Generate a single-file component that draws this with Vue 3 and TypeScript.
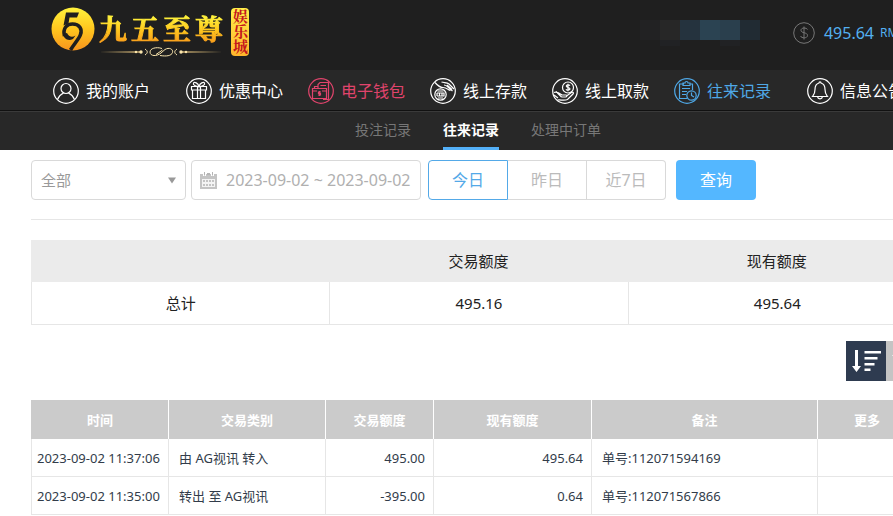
<script setup lang="ts">
import { ref } from 'vue'

type IconName = 'user' | 'gift' | 'wallet' | 'deposit' | 'withdraw' | 'records' | 'bell'

interface NavItem {
  icon: IconName
  label: string
  tone?: 'pink' | 'blue'
}

interface Entry {
  time: string
  kind: string
  amount: string
  balance: string
  note: string
}

const navGroups: NavItem[][] = [
  [{ icon: 'user', label: '我的账户' }],
  [
    { icon: 'gift', label: '优惠中心' },
    { icon: 'wallet', label: '电子钱包', tone: 'pink' },
    { icon: 'deposit', label: '线上存款' },
    { icon: 'withdraw', label: '线上取款' },
    { icon: 'records', label: '往来记录', tone: 'blue' },
  ],
  [{ icon: 'bell', label: '信息公告' }],
]

const subNav: string[] = ['投注记录', '往来记录', '处理中订单']
const activeSub = ref('往来记录')

const ranges: string[] = ['今日', '昨日', '近7日']
const activeRange = ref('今日')

const category = ref('全部')
const dateRange = ref('2023-09-02 ~ 2023-09-02')

const entries: Entry[] = [
  { time: '2023-09-02 11:37:06', kind: '由 AG视讯 转入', amount: '495.00', balance: '495.64', note: '单号:112071594169' },
  { time: '2023-09-02 11:35:00', kind: '转出 至 AG视讯', amount: '-395.00', balance: '0.64', note: '单号:112071567866' },
]
</script>

<template>
  <div class="page">
    <header class="top">
      <a class="brand" href="#">
        <svg class="emblem" viewBox="0 0 44 44" aria-hidden="true">
          <defs>
            <linearGradient id="gold" x1="0" y1="0" x2="0" y2="1">
              <stop offset="0" stop-color="#fff23c" />
              <stop offset="0.5" stop-color="#ffc61e" />
              <stop offset="1" stop-color="#f7941d" />
            </linearGradient>
          </defs>
          <circle cx="22" cy="22" r="21.5" fill="url(#gold)" />
          <path d="M15 5.500H28L26 10.500H18.500L17.500 16.500L12.500 18.500Z" fill="#1f1f1f" />
          <path d="M13.500 29C11.500 21 16 17 21.500 17C28.500 17 31.500 22 29.500 27.500C28 32 23 37 19.500 43" fill="none" stroke="#1f1f1f" stroke-width="3.600" />
          <path d="M12 27C13 32 17 34.500 22 32L24.500 28.500C21 31 17.500 29.500 16 26Z" fill="#1f1f1f" />
        </svg>
        <span class="wordmark">
          <span class="name"><span>九</span><span>五</span><span>至</span><span>尊</span></span>
          <svg class="flourish" viewBox="0 0 124 12" aria-hidden="true">
            <path d="M0 6L42 5.300V6.700ZM124 6L82 5.300V6.700Z" fill="#d8b978" />
            <g fill="#fbe6ad">
              <circle cx="37" cy="6" r="1.200" /><circle cx="42" cy="6" r="1.700" />
              <circle cx="82" cy="6" r="1.700" /><circle cx="87" cy="6" r="1.200" />
            </g>
            <path d="M46 3C49 5 49 7 46 9M78 3C75 5 75 7 78 9M63 2.500C57 0.500 51 2.500 51 6C51 10.500 58 10.500 62 7L66 3.500C70 1 74.500 3 73.500 6.500C72.500 10 67 10.500 61 9.500M57 8.500L63.500 4" fill="none" stroke="#fbe6ad" />
          </svg>
        </span>
        <span class="seal">娱乐城</span>
      </a>

      <div class="account">
        <svg class="masked" viewBox="0 0 120 30" aria-hidden="true">
          <path d="M0 0H20V20H0Z" fill="#222223" />
          <path d="M20 0H40V20H20Z" fill="#272727" />
          <path d="M40 0H60V20H40Z" fill="#25333e" />
          <path d="M60 0H80V20H60Z" fill="#2b4352" />
          <path d="M80 0H100V20H80Z" fill="#2a3f4d" />
          <path d="M100 0H120V20H100Z" fill="#212b33" />
          <path d="M20 20H40V26H20ZM80 20H100V26H80Z" fill="#212224" />
        </svg>
        <svg class="coin" viewBox="0 0 22 22" aria-hidden="true">
          <circle cx="11" cy="11" r="10.300" />
          <path d="M14.500 7.500C13.500 5.500 8 5.300 8 8.300C8 11.500 14.500 10 14.500 13.500C14.500 16.500 8.500 16.500 7.500 14M11 4.500V17.500" />
        </svg>
        <span class="amount">495.64</span>
        <span class="unit">RMB</span>
      </div>
    </header>

    <nav class="main-nav" aria-label="主菜单">
      <div v-for="(group, g) in navGroups" :key="g" class="nav-group">
        <a v-for="item in group" :key="item.label" href="#" class="nav-item" :class="item.tone">
          <svg viewBox="0 0 26 26" aria-hidden="true">
            <circle cx="13" cy="13" r="12.300" />
            <g v-if="item.icon === 'user'">
              <circle cx="13" cy="10.500" r="5" />
              <path d="M4.500 21.500C6 17.500 8.500 16 10.500 15M21.500 21.500C20 17.500 17.500 16 15.500 15" />
            </g>
            <g v-else-if="item.icon === 'gift'">
              <path d="M5.500 8.500H20.500V12H5.500ZM6.500 12V20.500H19.500V12M11.500 8.500V20.500M14.500 8.500V20.500M13 8.500C10 8.500 6.500 7 7.500 5C8.500 3.500 12 5 13 8.500C14 5 17.500 3.500 18.500 5C19.500 7 16 8.500 13 8.500" />
            </g>
            <g v-else-if="item.icon === 'wallet'">
              <path d="M4.500 10.500H18.500V20.500H4.500ZM4.500 13H9M14 13H18.500M10 10.500V6.500L12 4.500H20.500V21.500H15M6.500 10.500V8.500H10M12.500 7.500H18M11.500 13V18M13 14H10.500V15.500H12.500V17H10" />
            </g>
            <g v-else-if="item.icon === 'deposit'">
              <circle cx="10.500" cy="16.500" r="5.700" />
              <path d="M7 15V18M7 15H14V18H7M9.500 15V18M12 15V18M7.500 13H13.500M8 20H13M5 4.500C8 8 10 9.500 13 9.500C17 9.500 18 12 20.500 12.500M11.500 4C14 5 17 4 19 6L24 11M14 7C16 7 17.500 8.500 18.500 9.500L22.500 13M17 7L22 11.500" />
            </g>
            <g v-else-if="item.icon === 'withdraw'">
              <circle cx="16" cy="9.500" r="5.500" />
              <path d="M18 7.700C17 6.500 14 6.700 14.300 8.300C14.500 10 18 9 18 11C17.500 12.500 14.500 12.300 14 11.200M16 5.800V13.200M2 14.500C5 13 8 15.500 10 17H14C15.500 17 15 19 13.500 19H9.500M14.500 18L19.500 14.500C21 13.500 22 15 21 16L15.500 21.500C12 23 9 21.500 5.500 22M2 17L6 20M4 13.500L9.500 19" />
            </g>
            <g v-else-if="item.icon === 'records'">
              <path d="M10 6H5.500V20.500H13M15.500 6H18.500V12M9 7.500V5H11C11 3 14 3 14 5H16V7.500ZM8 10.500H16M8 13.500H13M8 16.500H12" />
              <circle cx="17.500" cy="17.500" r="4.700" />
              <path d="M17.500 14.500V17.500L20 19" />
            </g>
            <g v-else>
              <path d="M12 5C12 3.500 14 3.500 14 5C17 5.800 18 8.500 18 11.500C18 15.500 19 16.500 20.500 18.500H5.500C7 16.500 8 15.500 8 11.500C8 8.500 9 5.800 12 5ZM10.500 18.700C11 21.500 15 21.500 15.500 18.700" />
            </g>
          </svg>
          <span>{{ item.label }}</span>
        </a>
      </div>
    </nav>

    <nav class="sub-nav" aria-label="记录">
      <a
        v-for="label in subNav"
        :key="label"
        href="#"
        :class="{ active: label === activeSub }"
        @click.prevent="activeSub = label"
      >{{ label }}</a>
    </nav>

    <main class="content">
      <form class="filters" @submit.prevent>
        <div class="select-box">
          <select v-model="category" aria-label="类别">
            <option>全部</option>
          </select>
          <svg viewBox="0 0 8 7" aria-hidden="true"><path d="M0 0.500H8L4 6.500Z" /></svg>
        </div>
        <label class="date-box">
          <svg viewBox="0 0 17 17" aria-hidden="true">
            <path d="M0 2H3V4H6V2H11V4H14V2H17V17H0Z" fill="#c4c4c4" />
            <path d="M4 0H5V3.500H4ZM12 0H13V3.500H12ZM7 1H10V3H7Z" fill="#b5b5b5" />
            <path d="M2 7H15V15H2Z" fill="#f4f4f4" />
            <path d="M3 8H5V10H3ZM6 8H8V10H6ZM9 8H11V10H9ZM12 8H14V10H12ZM3 12H5V14H3ZM6 12H8V14H6ZM9 12H11V14H9ZM12 12H14V14H12Z" fill="#c4c4c4" />
          </svg>
          <input v-model="dateRange" type="text" aria-label="日期" />
        </label>
        <div class="ranges">
          <button
            v-for="label in ranges"
            :key="label"
            type="button"
            :class="{ active: label === activeRange }"
            @click="activeRange = label"
          >{{ label }}</button>
        </div>
        <button class="query" type="submit">查询</button>
      </form>

      <table class="summary">
        <thead>
          <tr><th></th><th>交易额度</th><th>现有额度</th></tr>
        </thead>
        <tbody>
          <tr><td>总计</td><td>495.16</td><td>495.64</td></tr>
        </tbody>
      </table>

      <div class="sorting">
        <button type="button" class="active" aria-label="降序">
          <svg viewBox="0 0 40 40" aria-hidden="true">
            <path d="M9 9H12V25H15L10.500 31L6 25H9ZM18.500 10H35V12.500H18.500ZM18.500 16H31.500V18.500H18.500ZM18.500 22H28.500V24.500H18.500ZM18.500 27.500H24.500V30H18.500Z" />
          </svg>
        </button>
        <button type="button" aria-label="升序">
          <svg viewBox="0 0 40 40" aria-hidden="true">
            <path d="M9 31H12V15H15L10.500 9L6 15H9ZM18.500 10H24.500V12.500H18.500ZM18.500 16H28.500V18.500H18.500ZM18.500 22H31.500V24.500H18.500ZM18.500 27.500H35V30H18.500Z" />
          </svg>
        </button>
      </div>

      <div class="details">
        <table>
          <colgroup>
            <col class="c-time" /><col class="c-kind" /><col class="c-amount" />
            <col class="c-balance" /><col class="c-note" /><col />
          </colgroup>
          <thead>
            <tr>
              <th>时间</th><th>交易类别</th><th>交易额度</th><th>现有额度</th><th>备注</th><th>更多</th>
            </tr>
          </thead>
          <tbody>
            <tr v-for="entry in entries" :key="entry.time">
              <td class="time">{{ entry.time }}</td>
              <td>{{ entry.kind }}</td>
              <td class="num">{{ entry.amount }}</td>
              <td class="num">{{ entry.balance }}</td>
              <td>{{ entry.note }}</td>
              <td></td>
            </tr>
          </tbody>
        </table>
      </div>
    </main>
  </div>
</template>

<style>
html,
body {
  background: #fff;
  overflow: hidden auto;
  scrollbar-width: none;
}
</style>

<style scoped>
.page,
.page * {
  box-sizing: border-box;
}

.page {
  min-width: 957px;
  font-family: "Noto Sans", "Noto Sans CJK SC", sans-serif;
  font-size: 16px;
  line-height: 24px;
  color: #222;
}

a {
  color: inherit;
  text-decoration: none;
}

button,
input,
select {
  font: inherit;
  margin: 0;
}

.top {
  display: flex;
  justify-content: space-between;
  height: 70px;
  padding: 0 31px 0 51px;
  background: #1f1f1f;
}

.brand {
  display: flex;
  align-items: flex-start;
  padding-top: 7px;
}

.emblem {
  width: 44px;
  height: 44px;
}

.wordmark {
  display: flex;
  flex-direction: column;
  align-items: center;
  margin-left: 4px;
  padding-top: 4px;
}

.name {
  display: flex;
  gap: 4px;
  font-family: "Noto Serif CJK SC", "Noto Sans CJK SC", serif;
  font-size: 28px;
  font-weight: 700;
  line-height: 34px;
}

.name span {
  background: linear-gradient(#fff03a 20%, #ffc81e 55%, #f9a01c 90%);
  background-clip: text;
  color: transparent;
  -webkit-text-stroke: 1px transparent;
}

.flourish {
  width: 124px;
  height: 12px;
  margin-top: 1px;
}

.seal {
  width: 18px;
  height: 48px;
  margin: 1px 0 0 8px;
  padding-top: 1px;
  border-radius: 4px;
  background: linear-gradient(#fff04a, #ffb52c);
  color: #c4161c;
  font-family: "Noto Serif CJK SC", "Noto Sans CJK SC", serif;
  font-size: 15px;
  font-weight: 700;
  line-height: 18px;
  writing-mode: vertical-rl;
  white-space: nowrap;
}

.account {
  display: flex;
  align-items: center;
  padding-bottom: 4px;
  color: #53b0f0;
}

.masked {
  width: 120px;
  height: 30px;
  margin: 4px 33px 0 0;
}

.coin {
  width: 22px;
  height: 22px;
  margin-right: 9px;
  fill: none;
  stroke: #777;
}

.unit {
  width: 46px;
  margin-left: 6px;
  font-size: 12px;
}

.main-nav {
  display: flex;
  gap: 36px;
  height: 41px;
  padding: 2px 0 0 53px;
  background: #282828;
  border-bottom: 1px solid #111;
  color: #fff;
}

.nav-group {
  display: flex;
  gap: 25px;
}

.nav-item {
  display: flex;
  align-items: center;
  gap: 7px;
  white-space: nowrap;
}

.nav-item svg {
  width: 26px;
  height: 26px;
  fill: none;
  stroke: currentColor;
  stroke-width: 1.2;
}

.pink {
  color: #e0446c;
}

.blue {
  color: #4fa8e6;
}

.sub-nav {
  display: flex;
  gap: 32px;
  height: 39px;
  padding-left: 355px;
  background: #282828;
  border-top: 1px solid #3a3a3a;
  color: #777;
  font-size: 14px;
  line-height: 36px;
}

.sub-nav a {
  border-bottom: 3px solid transparent;
}

.sub-nav .active {
  border-color: #53b0f8;
  color: #fff;
  font-weight: 700;
}

.content {
  padding: 10px 31px 0;
}

.filters {
  display: flex;
  padding-bottom: 19px;
  border-bottom: 1px solid #e6e6e6;
}

.select-box {
  display: grid;
  align-items: center;
  width: 155px;
  height: 40px;
  border: 1px solid #d9d9d9;
  border-radius: 4px;
}

.select-box select,
.select-box svg {
  grid-area: 1 / 1;
}

.select-box select {
  height: 38px;
  padding: 0 9px;
  border: 0;
  background: none;
  appearance: none;
  color: #999;
  font-size: 15px;
}

.select-box svg {
  justify-self: end;
  width: 8px;
  height: 7px;
  margin-right: 9px;
  fill: #999;
  pointer-events: none;
}

.date-box {
  display: flex;
  align-items: center;
  gap: 9px;
  width: 230px;
  height: 40px;
  margin-left: 5px;
  padding-left: 8px;
  border: 1px solid #d9d9d9;
  border-radius: 4px;
}

.date-box svg {
  flex: none;
  width: 17px;
  height: 17px;
}

.date-box input {
  flex: 1;
  min-width: 0;
  padding: 0;
  border: 0;
  background: none;
  color: #b0b0b0;
}

.ranges {
  display: flex;
  margin-left: 7px;
}

.ranges button {
  width: 79px;
  height: 40px;
  padding: 0;
  border: 1px solid #d9d9d9;
  border-left-width: 0;
  background: #fff;
  color: #bbb;
}

.ranges button:first-child {
  width: 80px;
  border-left-width: 1px;
  border-radius: 4px 0 0 4px;
}

.ranges button:last-child {
  border-radius: 0 4px 4px 0;
}

.ranges .active {
  border-color: #53a9e8;
  color: #53a9e8;
}

.query {
  width: 80px;
  height: 40px;
  margin-left: 10px;
  padding: 0;
  border: 0;
  border-radius: 4px;
  background: #54b7ff;
  color: #fff;
}

table {
  width: 100%;
  table-layout: fixed;
  border-collapse: separate;
  border-spacing: 0;
}

.summary {
  margin-top: 20px;
  font-size: 15px;
  text-align: center;
}

.summary th {
  height: 42px;
  padding: 0;
  background: #ebebeb;
  font-weight: 400;
}

.summary td {
  height: 43px;
  padding: 0;
  border: solid #e6e6e6;
  border-width: 0 0 1px 1px;
}

.sorting {
  display: flex;
  justify-content: flex-end;
  margin-top: 16px;
}

.sorting button {
  width: 40px;
  height: 40px;
  padding: 0;
  border: 0;
  background: #c4c4c4;
}

.sorting .active {
  background: #2e3b50;
}

.sorting svg {
  display: block;
  fill: #fff;
}

.details {
  margin-top: 19px;
  padding-right: 10px;
  font-size: 13px;
}

.c-time {
  width: 137px;
}

.c-kind {
  width: 157px;
}

.c-amount {
  width: 108px;
}

.c-balance {
  width: 158px;
}

.c-note {
  width: 226px;
}

.details th {
  height: 39px;
  padding: 0;
  border-left: 1px solid #fff;
  background: #cbcbcb;
  color: #fff;
  font-weight: 700;
}

.details th:first-child {
  border-color: #cbcbcb;
}

.details td {
  height: 38px;
  padding: 0 10px;
  border: solid #e6e6e6;
  border-width: 0 0 1px 1px;
  color: #323c4a;
  white-space: nowrap;
}

.details .time {
  padding: 0 5px;
}

.details .num {
  padding: 0 8px;
  text-align: right;
}
</style>
